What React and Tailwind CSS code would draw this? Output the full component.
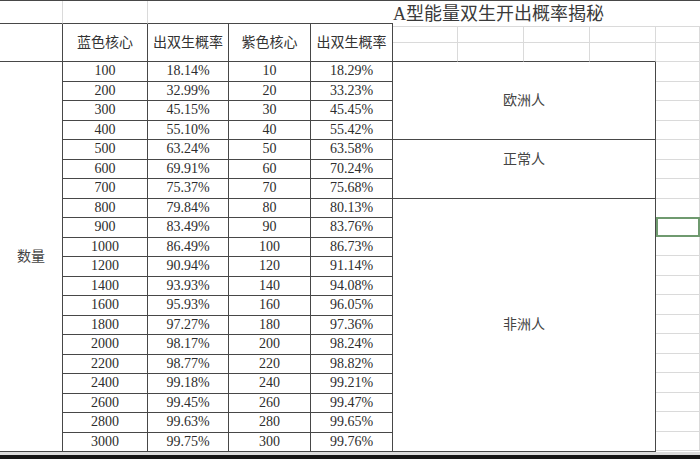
import React from "react";

const rows = [
  ["100", "18.14%", "10", "18.29%"],
  ["200", "32.99%", "20", "33.23%"],
  ["300", "45.15%", "30", "45.45%"],
  ["400", "55.10%", "40", "55.42%"],
  ["500", "63.24%", "50", "63.58%"],
  ["600", "69.91%", "60", "70.24%"],
  ["700", "75.37%", "70", "75.68%"],
  ["800", "79.84%", "80", "80.13%"],
  ["900", "83.49%", "90", "83.76%"],
  ["1000", "86.49%", "100", "86.73%"],
  ["1200", "90.94%", "120", "91.14%"],
  ["1400", "93.93%", "140", "94.08%"],
  ["1600", "95.93%", "160", "96.05%"],
  ["1800", "97.27%", "180", "97.36%"],
  ["2000", "98.17%", "200", "98.24%"],
  ["2200", "98.77%", "220", "98.82%"],
  ["2400", "99.18%", "240", "99.21%"],
  ["2600", "99.45%", "260", "99.47%"],
  ["2800", "99.63%", "280", "99.65%"],
  ["3000", "99.75%", "300", "99.76%"],
];

const headers = ["蓝色核心", "出双生概率", "紫色核心", "出双生概率"];

// widths of the four data columns
const colW = ["w-[85px]", "w-[81px]", "w-[82px]", "w-[82px]"];
const sideW = ["w-[65px]", "w-[66px]", "w-[66px]", "w-[66px]", "w-[44px]"];

const dark = "border-[#474747]";
const light = "border-[#dadada]";

const App = () => {
  return (
    <div
      className="w-[700px] h-[459px] bg-white overflow-hidden flex flex-col text-[#2d2d2d]"
      style={{ fontFamily: '"Liberation Serif", "Noto Sans CJK SC", serif' }}
    >
      <div className={`flex h-[452px] border-t ${dark}`}>
        {/* left: table */}
        <div className="w-[393px] flex flex-col">
          {/* blank row above header */}
          <div className="flex h-[23px]">
            <div className="w-[63px] border-r border-b border-r-[#dadada] border-b-[#474747]" />
            <div className="w-[85px] border-r border-b border-r-[#dadada] border-b-[#474747]" />
            <div className={`flex-1 border-b ${dark}`} />
          </div>

          {/* header */}
          <div className="flex h-[38px]">
            <div className={`w-[63px] border-r border-b ${dark}`} />
            {headers.map((h, i) => (
              <div
                key={i}
                className={`${colW[i]} border-r border-b ${dark} flex items-center justify-center text-[14px] text-[#333]`}
              >
                {h}
              </div>
            ))}
          </div>

          {/* body */}
          <div className="flex flex-1">
            <div className={`w-[63px] border-r border-b ${dark} flex items-center justify-center text-[14px] text-[#444]`}>
              数量
            </div>
            <div className="flex flex-col">
              {rows.map((r, ri) => (
                <div key={ri} className="flex h-[19.5px]">
                  {r.map((v, ci) => (
                    <div
                      key={ci}
                      className={`${colW[ci]} border-r border-b ${dark} flex items-center justify-center text-[14px] leading-none`}
                    >
                      {v}
                    </div>
                  ))}
                </div>
              ))}
            </div>
          </div>
        </div>

        {/* right: title + groups */}
        <div className="flex-1 flex flex-col">
          <div className={`h-[26px] border-b ${light} flex items-center text-[18px] text-[#3a3a3a] leading-none`}>
            A型能量双生开出概率揭秘
          </div>
          <div className="flex h-[16px]">
            {sideW.map((w, i) => (
              <div key={i} className={`${w} border-r border-b ${light}`} />
            ))}
          </div>
          <div className="flex h-[19px]">
            {sideW.map((w, i) =>
              i < 4 ? (
                <div key={i} className={`${w} border-r border-b border-r-[#dadada] border-b-[#474747]`} />
              ) : (
                <div key={i} className={`${w} border-r border-b ${light}`} />
              )
            )}
          </div>

          <div className="flex flex-1">
            <div className="w-[263px] flex flex-col">
              <div className={`h-[78px] border-r border-b ${dark} flex items-center justify-center text-[14px] text-[#444]`}>
                欧洲人
              </div>
              <div className={`h-[58.5px] border-r border-b ${dark} flex items-center justify-center pb-[18px] text-[14px] text-[#444]`}>
                正常人
              </div>
              <div className={`flex-1 border-r border-b ${dark} flex items-center justify-center text-[14px] text-[#444]`}>
                非洲人
              </div>
            </div>
            <div className="w-[44px] flex flex-col">
              {rows.map((_, i) =>
                i === 8 ? (
                  <div key={i} className="h-[19.5px] border-2 border-[#6f9a6f] -mt-px" />
                ) : (
                  <div key={i} className={`h-[19.5px] border-r border-b ${light}`} />
                )
              )}
            </div>
          </div>
        </div>
      </div>

      <div className="h-[3px] bg-[#dcdcdc]" />
      <div className="flex-1 bg-[#151515]" />
    </div>
  );
};

export default App;
